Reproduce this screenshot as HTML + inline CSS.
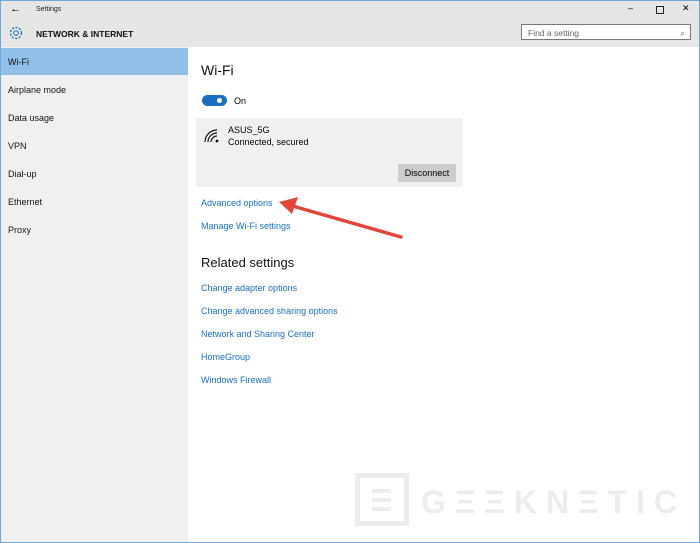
<!DOCTYPE html><html><head><style>
body{margin:0;width:700px;height:543px;overflow:hidden;font-family:"Liberation Sans",sans-serif;}
.win{position:absolute;left:0;top:0;width:698px;height:541px;border:1px solid #6fa9d8;background:#fff;}
.top{position:absolute;left:0;top:0;width:698px;height:46px;background:#e6e6e6;}
.side{position:absolute;left:0;top:46px;width:187px;height:495px;background:#f0f0f0;}
.item{position:absolute;left:7px;font-size:9px;color:#111;}
a{position:absolute;left:200px;font-size:9px;color:#1a6fc0;text-decoration:none;}
</style></head><body><div class="win">
<div class="top">
<div style="position:absolute;left:9px;top:2px;font-size:11px;">←</div>
<div style="position:absolute;left:35px;top:5px;font-size:7px;color:#222">Settings</div>
<svg style="position:absolute;left:7px;top:24px" width="16" height="16" viewBox="0 0 16 16"><circle cx="8" cy="8" r="5.5" fill="none" stroke="#1a6fc0" stroke-width="1.3" stroke-dasharray="2.2 1.4"/><circle cx="8" cy="8" r="2.3" fill="none" stroke="#1a6fc0" stroke-width="1"/></svg>
<div style="position:absolute;left:35px;top:28px;font-size:8.5px;font-weight:bold;color:#111">NETWORK &amp; INTERNET</div>
<div style="position:absolute;left:627px;top:2px;font-size:9px">–</div>
<div style="position:absolute;left:655px;top:5px;width:6px;height:6px;border:1px solid #222"></div>
<div style="position:absolute;left:681px;top:2px;font-size:9px">✕</div>
<div style="position:absolute;left:520px;top:23px;width:170px;height:16px;border:1px solid #777;background:#fff;font-size:8.5px;color:#666;line-height:16px;box-sizing:border-box;padding-left:6px">Find a setting<span style="position:absolute;right:5px;">⌕</span></div>
</div>
<div class="side">
<div style="position:absolute;left:0;top:1px;width:187px;height:27px;background:#90bfe8"></div>
<div class="item" style="top:10px">Wi-Fi</div>
<div class="item" style="top:38px">Airplane mode</div>
<div class="item" style="top:66px">Data usage</div>
<div class="item" style="top:94px">VPN</div>
<div class="item" style="top:122px">Dial-up</div>
<div class="item" style="top:150px">Ethernet</div>
<div class="item" style="top:178px">Proxy</div>
</div>
<div style="position:absolute;left:200px;top:61px;font-size:14px;color:#111">Wi-Fi</div>
<div style="position:absolute;left:201px;top:94px;width:25px;height:11px;border-radius:6px;background:#1a6fc0"></div>
<div style="position:absolute;left:216px;top:97px;width:5px;height:5px;border-radius:50%;background:#fff"></div>
<div style="position:absolute;left:233px;top:95px;font-size:9px">On</div>
<div style="position:absolute;left:195px;top:117px;width:267px;height:69px;background:#f0f0f0"></div>
<svg style="position:absolute;left:203px;top:128px" width="16" height="14" viewBox="0 0 16 14"><path d="M1 13 A12 12 0 0 1 13 1 M4 13 A9 9 0 0 1 13 4 M7 13 A6 6 0 0 1 13 7" fill="none" stroke="#111" stroke-width="1.2"/><circle cx="13" cy="12" r="1.4" fill="#111"/></svg>
<div style="position:absolute;left:227px;top:124px;font-size:9px">ASUS_5G</div>
<div style="position:absolute;left:227px;top:136px;font-size:9px">Connected, secured</div>
<div style="position:absolute;left:397px;top:163px;width:58px;height:18px;background:#ccc;font-size:9px;text-align:center;line-height:18px">Disconnect</div>
<a style="top:197px">Advanced options</a>
<a style="top:220px">Manage Wi-Fi settings</a>
<svg style="position:absolute;left:270px;top:190px" width="140" height="55"><path d="M130 46 L18 14" stroke="#e0463a" stroke-width="3.5" stroke-linecap="round"/><path d="M8 11 L27 6 L21 23 Z" fill="#e0463a"/></svg>
<div style="position:absolute;left:200px;top:254px;font-size:13px;color:#111">Related settings</div>
<a style="top:282px">Change adapter options</a>
<a style="top:305px">Change advanced sharing options</a>
<a style="top:328px">Network and Sharing Center</a>
<a style="top:351px">HomeGroup</a>
<a style="top:374px">Windows Firewall</a>
<svg style="position:absolute;left:350px;top:468px" width="340" height="62">
<rect x="6.5" y="6.5" width="49" height="48" fill="none" stroke="#ececec" stroke-width="5"/>
<rect x="21" y="20" width="19" height="4" fill="#ececec"/><rect x="21" y="29" width="19" height="4" fill="#ececec"/><rect x="21" y="38" width="19" height="4" fill="#ececec"/>
<text x="70" y="44" font-family="Liberation Sans" font-weight="bold" font-size="32" fill="#ececec" textLength="256" lengthAdjust="spacing">GΞΞKNΞTIC</text>
</svg>
</div></body></html>
